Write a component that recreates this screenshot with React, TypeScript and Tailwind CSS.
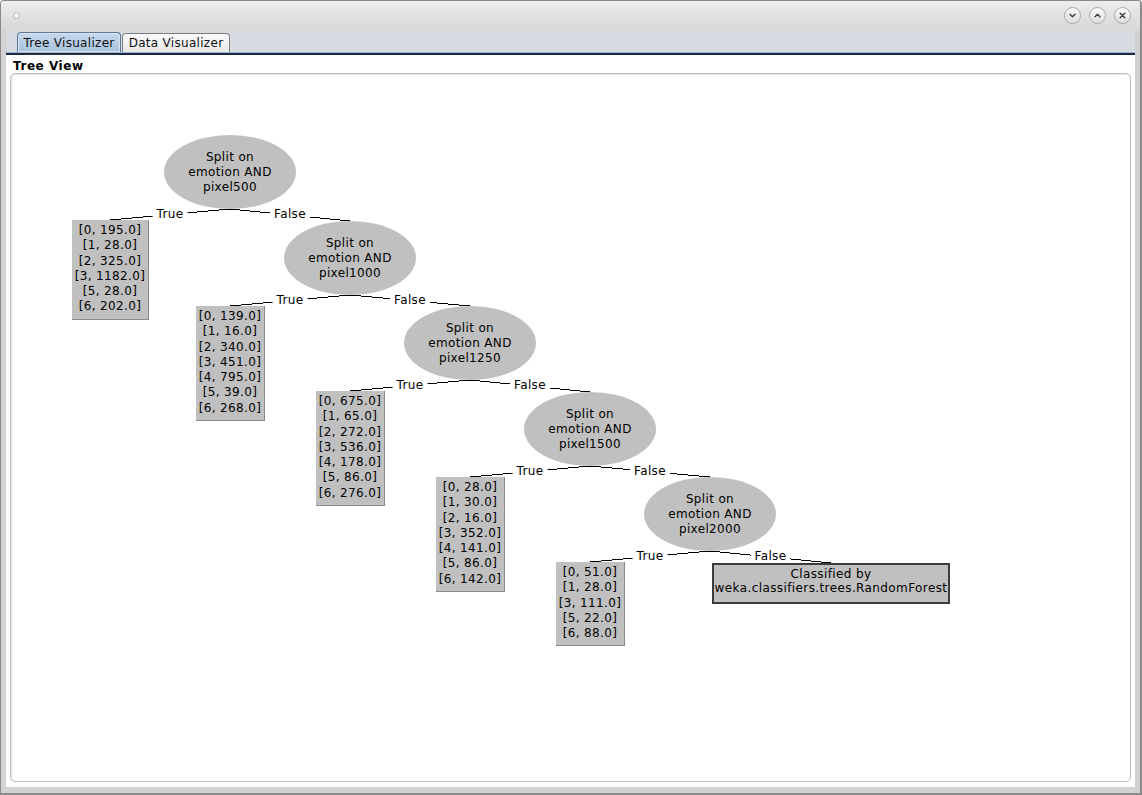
import React from "react";

const OX = 11;
const OY = 74;

type Leaf = { lines: string[]; w: number };

const splits = ["pixel500", "pixel1000", "pixel1250", "pixel1500", "pixel2000"];

const leaves: Leaf[] = [
  { lines: ["[0, 195.0]", "[1, 28.0]", "[2, 325.0]", "[3, 1182.0]", "[5, 28.0]", "[6, 202.0]"], w: 77 },
  { lines: ["[0, 139.0]", "[1, 16.0]", "[2, 340.0]", "[3, 451.0]", "[4, 795.0]", "[5, 39.0]", "[6, 268.0]"], w: 69 },
  { lines: ["[0, 675.0]", "[1, 65.0]", "[2, 272.0]", "[3, 536.0]", "[4, 178.0]", "[5, 86.0]", "[6, 276.0]"], w: 69 },
  { lines: ["[0, 28.0]", "[1, 30.0]", "[2, 16.0]", "[3, 352.0]", "[4, 141.0]", "[5, 86.0]", "[6, 142.0]"], w: 69 },
  { lines: ["[0, 51.0]", "[1, 28.0]", "[3, 111.0]", "[5, 22.0]", "[6, 88.0]"], w: 69 },
];

const cx = (i: number) => 230 + 120 * i;
const cy = (i: number) => Math.round(172 + 85.5 * i);
const leafTop = (i: number) => Math.round(220 + 85.5 * i);

type Edge = { x1: number; y1: number; x2: number; y2: number; label: string };

const edges: Edge[] = [];
splits.forEach((_, i) => {
  const px = cx(i);
  const py = cy(i) + 37;
  edges.push({ x1: px, y1: py, x2: cx(i) - 120, y2: leafTop(i), label: "True" });
  if (i < splits.length - 1) {
    edges.push({ x1: px, y1: py, x2: cx(i + 1), y2: cy(i + 1) - 37, label: "False" });
  } else {
    edges.push({ x1: px, y1: py, x2: 831, y2: 563, label: "False" });
  }
});

function WinButton({ children }: { children: React.ReactNode }) {
  return (
    <div className="w-[17px] h-[17px] rounded-full border border-[#a9a9a9] bg-gradient-to-b from-[#fafafa] to-[#dedede] flex items-center justify-center">
      <svg width="9" height="9" viewBox="0 0 9 9" fill="none" stroke="#404040" strokeWidth="1.4" strokeLinecap="round" strokeLinejoin="round">
        {children}
      </svg>
    </div>
  );
}

function TreeCanvas() {
  return (
    <div className="relative flex-1 mx-[4px] mb-[5px] rounded-[5px] border border-[#bdbdbd] bg-white shadow-[inset_1px_1px_2px_rgba(0,0,0,0.12)] overflow-hidden tracking-[0.35px]">
      <svg className="absolute inset-0" width="1119" height="707" shapeRendering="crispEdges">
        {edges.map((e, k) => (
          <line key={k} x1={e.x1 - OX} y1={e.y1 - OY} x2={e.x2 - OX} y2={e.y2 - OY} stroke="#000" strokeWidth="1" />
        ))}
      </svg>

      {edges.map((e, k) => (
        <div
          key={"l" + k}
          className="absolute -translate-x-1/2 bg-white px-[4px] h-[15px] leading-[15px] text-black"
          style={{ left: (e.x1 + e.x2) / 2 - OX, top: (e.y1 + e.y2) / 2 - OY - 8 }}
        >
          {e.label}
        </div>
      ))}

      {splits.map((s, i) => (
        <div
          key={s}
          className="absolute w-[132px] h-[74px] rounded-[50%] bg-[#c0c0c0] flex flex-col items-center justify-center leading-[15px] text-black"
          style={{ left: cx(i) - 66 - OX, top: cy(i) - 37 - OY }}
        >
          <span>Split on</span>
          <span>emotion AND</span>
          <span>{s}</span>
        </div>
      ))}

      {leaves.map((l, i) => (
        <div
          key={"leaf" + i}
          className="absolute bg-[#c0c0c0] border-r border-b border-[#8a8a8a] pt-[3px] pb-[4px] flex flex-col items-center leading-[15.3px] text-black"
          style={{ left: cx(i) - 120 - Math.floor(l.w / 2) - OX, top: leafTop(i) - OY, width: l.w }}
        >
          {l.lines.map((t) => (
            <span key={t}>{t}</span>
          ))}
        </div>
      ))}

      <div
        className="absolute w-[238px] h-[41px] bg-[#c0c0c0] border-2 border-[#3c3c3c] pt-[2px] flex flex-col items-center leading-[14px] text-black tracking-[0.4px]"
        style={{ left: 712 - OX, top: 563 - OY }}
      >
        <span>Classified by</span>
        <span>weka.classifiers.trees.RandomForest</span>
      </div>
    </div>
  );
}

export default function App() {
  return (
    <div className="w-[1142px] h-[795px] flex flex-col border-l border-t border-r-2 border-b-2 border-[#8a8a8a] rounded-t-[4px] overflow-hidden font-['DejaVu_Sans',sans-serif] text-[12px]">
      {/* title bar */}
      <div className="h-[29px] shrink-0 flex items-center bg-gradient-to-b from-[#ededed] to-[#d7d7d7] pl-[12px] pr-[9px]">
        <div className="w-[7px] h-[7px] rounded-full border border-[#b4b4b4] bg-[#f8f8f8]" />
        <div className="ml-auto flex gap-[8px] items-center">
          <WinButton>
            <path d="M2 3.3 L4.5 5.8 L7 3.3" />
          </WinButton>
          <WinButton>
            <path d="M2 5.7 L4.5 3.2 L7 5.7" />
          </WinButton>
          <WinButton>
            <path d="M2.2 2.2 L6.8 6.8 M6.8 2.2 L2.2 6.8" />
          </WinButton>
        </div>
      </div>

      {/* body frame */}
      <div className="flex-1 flex flex-col bg-[#d2d2d2] px-[5px] pb-[6px]">
        {/* tabs */}
        <div className="h-[22px] shrink-0 flex items-end pl-[11px] bg-[#d7dae0] tracking-[0.3px]">
          <div className="h-[20px] w-[104px] rounded-t-[4px] border border-b-0 border-[#5f7694] bg-gradient-to-b from-[#c6d9ec] to-[#a9c3de] shadow-[inset_0_0_0_1px_#d8e6f4] flex items-center justify-center text-[#111]">
            Tree Visualizer
          </div>
          <div className="h-[19px] w-[108px] ml-[1px] rounded-t-[4px] border border-b-0 border-[#7c7c7c] bg-gradient-to-b from-[#fbfbfb] to-[#e8e8e8] flex items-center justify-center text-[#111]">
            Data Visualizer
          </div>
        </div>
        <div className="h-[1px] shrink-0 bg-[#9fb3cc]" />
        <div className="h-[2px] shrink-0 bg-[#1d2a42]" />

        {/* content */}
        <div className="flex-1 flex flex-col bg-white">
          <div className="h-[18px] shrink-0 pt-[4px] pl-[7px] leading-[15px] font-bold text-black tracking-[0.55px]">Tree View</div>
          <TreeCanvas />
        </div>
      </div>
    </div>
  );
}
